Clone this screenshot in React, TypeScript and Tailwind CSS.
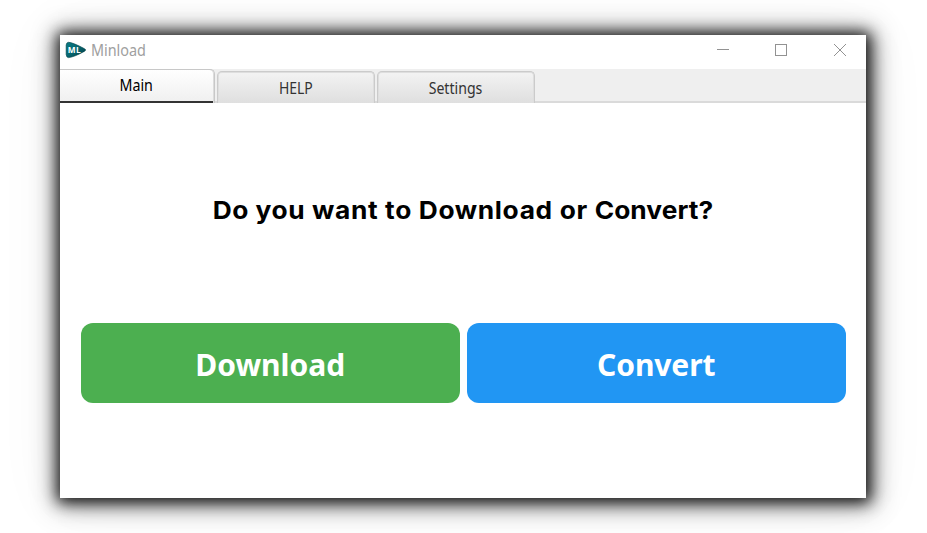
const tabBase =
  "box-border flex justify-center rounded-t-[5px] font-['Noto_Sans',sans-serif] text-[15.5px] leading-[20px]";

function TitleBar() {
  return (
    <header className="flex h-[34px] items-start bg-white">
      <svg className="mt-[6px] ml-[5px] h-[18px] w-[22px] shrink-0" viewBox="0 0 22 18">
        <defs>
          <linearGradient id="logo" x1="0" y1="0" x2="1" y2="1">
            <stop offset="0" stopColor="#087a83" />
            <stop offset="0.5" stopColor="#066670" />
            <stop offset="1" stopColor="#02363d" />
          </linearGradient>
        </defs>
        <path
          d="M3.6 1.3 Q8 1.6 19.6 7.8 Q21.6 9 19.6 10.2 Q9 16.1 3.4 16.6 Q1.4 16.4 1.2 13.5 V4 Q1.5 1.3 3.6 1.3Z"
          fill="url(#logo)"
          stroke="#064b52"
          strokeWidth="0.7"
        />
        <text x="2.8" y="11.8" fill="white" fontFamily="Open Sans, sans-serif" fontSize="8.3" fontWeight="700" letterSpacing="0.3">
          ML
        </text>
      </svg>
      <span className="mt-[5px] ml-[4px] origin-left scale-x-[0.93] font-['Noto_Sans',sans-serif] text-[15.5px] leading-[20px] tracking-[-0.05px] text-[#a0a0a0]">
        Minload
      </span>
      <div className="mt-[9px] mr-[20px] ml-auto flex gap-[46px] text-[#929292]">
        <svg width="12" height="12" viewBox="0 0 12 12" shapeRendering="crispEdges">
          <path d="M0 5.5H12" stroke="currentColor" />
        </svg>
        <svg width="12" height="12" viewBox="0 0 12 12" shapeRendering="crispEdges">
          <rect x="0.5" y="0.5" width="11" height="11" fill="none" stroke="currentColor" />
        </svg>
        <svg className="ml-[1px]" width="12" height="12" viewBox="0 0 12 12">
          <path d="M0 0L12 12M12 0L0 12" stroke="currentColor" />
        </svg>
      </div>
    </header>
  );
}

function Tabs() {
  return (
    <nav className="flex h-[34px] items-end gap-[2px] bg-[#efefef] shadow-[inset_0_-2px_0_#dadada]">
      <div className={`${tabBase} h-[34px] w-[155px] rounded-tl-none border-t border-r border-[#c8c8c8] bg-linear-to-b from-white to-[#efefef] pt-[5px] pr-[2px] text-black shadow-[inset_-1px_0_0_#dcdcdc,inset_0_-2px_0_#333]`}>
        <span className="inline-block scale-x-[0.92]">Main</span>
      </div>
      <div className={`${tabBase} h-[32px] w-[158px] border border-b-0 border-[#cbcbcb] bg-linear-to-b from-[#f3f3f3] to-[#dfdfdf] pt-[6px] text-[#333] shadow-[inset_0_1px_0_#dedede,inset_1px_0_0_#dedede,inset_-1px_0_0_#dedede]`}>
        <span className="inline-block scale-x-[0.9]">HELP</span>
      </div>
      <div className={`${tabBase} h-[32px] w-[158px] border border-b-0 border-[#cbcbcb] bg-linear-to-b from-[#f3f3f3] to-[#dfdfdf] pt-[6px] pr-px text-[#333] shadow-[inset_0_1px_0_#dedede,inset_1px_0_0_#dedede,inset_-1px_0_0_#dedede]`}>
        <span className="inline-block scale-x-[0.91]">Settings</span>
      </div>
    </nav>
  );
}

export default function App() {
  return (
    <div className="h-[533px] w-[927px] overflow-hidden bg-white pt-[35px] pl-[60px]">
      <main className="h-[463px] w-[806px] bg-white shadow-[1px_1px_14px_3px_rgba(0,0,0,0.9),2px_2px_24px_5px_rgba(0,0,0,0.45),0_0_60px_4px_rgba(0,0,0,0.06)]">
        <TitleBar />
        <Tabs />
        <h1 className="mt-[90px] scale-x-[1.061] text-center font-['Inter',sans-serif] text-[24.8px] leading-[34px] font-bold tracking-[0.4px] whitespace-nowrap text-black">
          Do <span className="tracking-[0.6px]">you want to </span>
          <span className="tracking-[0.6px]">Download or </span>
          <span className="tracking-[0.05px]">Convert?</span>
        </h1>
        <div className="mt-[96px] flex gap-[7.5px] pr-[20.5px] pl-[21px] font-['Noto_Sans',sans-serif] text-[30px] leading-[40px] font-bold text-white">
          <button className="h-[80px] flex-1 rounded-[12px] bg-[#4caf50] pt-[4px]">Download</button>
          <button className="h-[80px] flex-1 rounded-[12px] bg-[#2196f3] pt-[4px] tracking-[-0.1px]">Convert</button>
        </div>
      </main>
    </div>
  );
}
